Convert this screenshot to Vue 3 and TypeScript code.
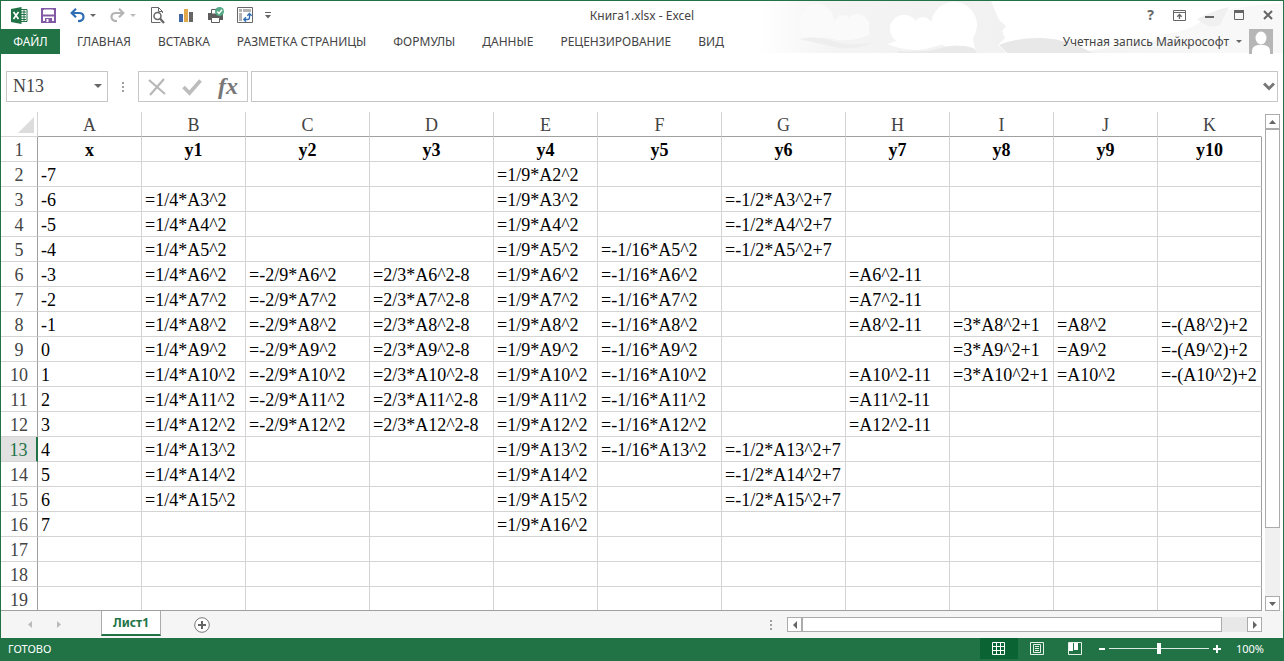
<script setup lang="ts">
import { ref } from 'vue'

interface Column {
  letter: string
  title: string
  width: number
}

const columns: Column[] = [
  { letter: 'A', title: 'x', width: 104 },
  { letter: 'B', title: 'y1', width: 104 },
  { letter: 'C', title: 'y2', width: 124 },
  { letter: 'D', title: 'y3', width: 124 },
  { letter: 'E', title: 'y4', width: 104 },
  { letter: 'F', title: 'y5', width: 124 },
  { letter: 'G', title: 'y6', width: 124 },
  { letter: 'H', title: 'y7', width: 104 },
  { letter: 'I', title: 'y8', width: 104 },
  { letter: 'J', title: 'y9', width: 104 },
  { letter: 'K', title: 'y10', width: 104 },
]

const between = (n: number, from: number, to: number) => n >= from && n <= to

function cell(letter: string, n: number): string {
  if (!between(n, 2, 16)) return ''
  switch (letter) {
    case 'A': return String(n - 9)
    case 'B': return between(n, 3, 15) ? `=1/4*A${n}^2` : ''
    case 'C': return between(n, 6, 12) ? `=-2/9*A${n}^2` : ''
    case 'D': return between(n, 6, 12) ? `=2/3*A${n}^2-8` : ''
    case 'E': return `=1/9*A${n}^2`
    case 'F': return between(n, 5, 13) ? `=-1/16*A${n}^2` : ''
    case 'G': return between(n, 3, 5) || between(n, 13, 15) ? `=-1/2*A${n}^2+7` : ''
    case 'H': return between(n, 6, 8) || between(n, 10, 12) ? `=A${n}^2-11` : ''
    case 'I': return between(n, 8, 10) ? `=3*A${n}^2+1` : ''
    case 'J': return between(n, 8, 10) ? `=A${n}^2` : ''
    case 'K': return between(n, 8, 10) ? `=-(A${n}^2)+2` : ''
    default: return ''
  }
}

const rows = Array.from({ length: 18 }, (_, i) => i + 2)
const tabs = ['ГЛАВНАЯ', 'ВСТАВКА', 'РАЗМЕТКА СТРАНИЦЫ', 'ФОРМУЛЫ', 'ДАННЫЕ', 'РЕЦЕНЗИРОВАНИЕ', 'ВИД']
const activeRow = 13
const nameBox = ref('N13')
const formula = ref('')
const zoom = ref(100)
</script>

<template>
  <div class="window">
    <header class="top">
      <svg class="clouds" viewBox="0 0 524 53" aria-hidden="true">
        <defs>
          <linearGradient id="sky" x1="0" x2="1" y1="0" y2="0">
            <stop offset="0" stop-color="#fff" />
            <stop offset="0.14" stop-color="#f4f4f4" />
            <stop offset="0.5" stop-color="#f1f1f1" />
            <stop offset="0.8" stop-color="#f6f6f6" />
            <stop offset="1" stop-color="#f6f6f6" />
          </linearGradient>
        </defs>
        <rect width="524" height="52" fill="url(#sky)" />
        <g fill="#fafafa">
          <circle cx="58" cy="20" r="17" /><circle cx="84" cy="23" r="9" /><circle cx="98" cy="25" r="12" />
          <path d="M42 20h68v14q-20 8-36 4t-33-1z" />
        </g>
        <path d="M40 38q18-4 34 2t42 1q-22 9-40 5t-36-8z" fill="#eeeeee" />
        <g fill="#fff">
          <circle cx="145" cy="28" r="14" /><circle cx="164" cy="25" r="9" /><circle cx="195" cy="24" r="23" />
          <path d="M132 28h80l4 20q-22-9-42-2t-46-3l10-3z" />
        </g>
        <path d="M138 50q30 2 44-3t32 0l4 5h-78z" fill="#e9e9e9" />
        <path d="M232 0h292v8q-40 0-54 8-20 0-27 20l-40 2-86 14h-70l-8-8 7-7-3-7 4-5-7-6z" fill="#fff" />
        <path d="M240 44q20-8 44-7t50 15h-86z" fill="#e8e8e8" />
        <path d="M398 34q30-2 46-15t80-17v50h-80q-15-12-46-18z" fill="#f8f8f8" />
        <path d="M438 18q20-10 32-12l-9 18q-11 5-23-6z" fill="#f0f0f0" />
      </svg>

      <div class="titlebar">
        <div class="quick">
          <svg class="i-excel" width="17" height="17" viewBox="0 0 17 17" aria-hidden="true">
            <path d="M10 2.500h6v12h-6" fill="#fff" stroke="#217346" />
            <path d="M10 5h5M10 7.500h5M10 10h5M10 12.500h5M13 3v11" stroke="#217346" />
            <path d="M0 2 10.500 0v17L0 15z" fill="#217346" />
            <path d="m2.500 5 5 7M7.500 5l-5 7" stroke="#fff" stroke-width="1.700" />
          </svg>
          <button class="i-save" aria-label="Сохранить">
            <svg width="15" height="15" viewBox="0 0 15 15"><path d="M1 1h13v13H1z" fill="#fff" stroke="#8259a5" stroke-width="2" /><path d="M1 6.500h13v2H1z" fill="#8259a5" /><path d="M3 1.500h9V6H3z" fill="#fff" /><path d="M4 10h7v4H4z" fill="#8259a5" /><path d="M5.500 11h2v3h-2z" fill="#fff" /></svg>
          </button>
          <button class="i-undo" aria-label="Отменить">
            <svg width="15" height="15" viewBox="0 0 15 15" fill="none" stroke="#2f6db5" stroke-width="2.200"><path d="M1.500 5H9q4.500 0 4.500 4T8 13.200M6 .8 1.700 5 6 9.200" /></svg>
          </button>
          <i class="caret dark"></i>
          <button class="i-redo" aria-label="Вернуть">
            <svg width="15" height="15" viewBox="0 0 15 15" fill="none" stroke="#b4b4b4" stroke-width="2.200"><path d="M13.500 5H6Q1.500 5 1.500 9T7 13.200M9 .8 13.300 5 9 9.200" /></svg>
          </button>
          <i class="caret light"></i>
          <button class="i-preview" aria-label="Предварительный просмотр">
            <svg width="15" height="17" viewBox="0 0 15 17" fill="none" stroke="#666"><path d="M12.500 6V4.500l-4-4h-7v15h9M8.500 .5v4h4" /><circle cx="7.500" cy="9" r="3.500" stroke-width="1.500" /><path d="m10 11.500 4 4.500" stroke-width="2.200" /></svg>
          </button>
          <button class="i-chart" aria-label="Диаграмма">
            <svg width="15" height="15" viewBox="0 0 15 15"><path d="M0 6h4v8H0z" fill="#4068a8" /><path d="M5 1h4v13H5z" fill="#e2a94c" /><path d="M10 4h4v10h-4z" fill="#666" /></svg>
          </button>
          <button class="i-print" aria-label="Быстрая печать">
            <svg width="18" height="16" viewBox="0 0 18 16"><path d="M1 6h15v7H1z" fill="#5c5c5c" /><path d="M4.500 7V2.500h6V7z" fill="#fff" stroke="#5c5c5c" /><path d="M4.500 10.500h8v5h-8z" fill="#fff" stroke="#5c5c5c" /><circle cx="12.500" cy="4.500" r="4.500" fill="#56ab86" /><path d="m10.300 4.500 1.700 2 3-3.700" fill="none" stroke="#fff" stroke-width="1.400" /></svg>
          </button>
          <button class="i-pivot" aria-label="Сводная таблица">
            <svg width="16" height="16" viewBox="0 0 16 16"><path d="M.5 .5h15v15H.5z" fill="#fff" stroke="#666" /><path d="M2 2h3v3H2zM6 2h8v3H6zM2 6h3v8H2z" fill="#b4b4b4" /><path d="M7 12.500h3.500q2 0 2-2V7M9 10.300 6.800 12.500 9 14.700M10.300 8.800l2.200-2.300 2.200 2.300" fill="none" stroke="#2f6db5" stroke-width="1.300" /></svg>
          </button>
          <button class="i-more" aria-label="Настройка панели">
            <svg width="6" height="7" viewBox="0 0 6 7"><path d="M0 .5h6" stroke="#666" /><path d="M0 3h6L3 6.500z" fill="#666" /></svg>
          </button>
        </div>
        <h1>Книга1.xlsx - Excel</h1>
        <div class="controls">
          <button class="help" aria-label="Справка">?</button>
          <button aria-label="Параметры ленты"><svg width="13" height="11" viewBox="0 0 13 11" fill="none" stroke="#666"><path d="M.5 .5h12v10H.5zM.5 2.500h12" /><path d="M6.500 9V5M4.300 6.700l2.200-2.200 2.200 2.200" stroke-width="1.300" /></svg></button>
          <button aria-label="Свернуть"><svg width="10" height="10" viewBox="0 0 10 10"><path d="M0 6h9v2H0z" fill="#666" /></svg></button>
          <button aria-label="Развернуть"><svg width="10" height="10" viewBox="0 0 10 10"><path d="M.5 1v8.500h9V1z" fill="none" stroke="#666" /><path d="M0 0h10v3H0z" fill="#666" /></svg></button>
          <button aria-label="Закрыть"><svg width="10" height="10" viewBox="0 0 10 10"><path d="m1 1 8 8M9 1 1 9" stroke="#666" stroke-width="2" /></svg></button>
        </div>
      </div>

      <nav class="ribbon">
        <button class="file">ФАЙЛ</button>
        <button v-for="t in tabs" :key="t" class="tab">{{ t }}</button>
        <button class="account">Учетная запись Майкрософт<i class="caret"></i></button>
        <svg class="avatar" width="24" height="25" viewBox="0 0 24 25" aria-hidden="true"><path d="M0 0h24v25H0z" fill="#b6b6b6" /><ellipse cx="12" cy="9" rx="5.500" ry="6.500" fill="#fff" /><path d="M3 25v-3q0-5 6-6h6q6 1 6 6v3z" fill="#fff" /></svg>
      </nav>
    </header>

    <section class="formula">
      <div class="name-box">
        <input v-model="nameBox" type="text" aria-label="Имя ячейки" />
        <button aria-label="Список имен"><i class="caret wide"></i></button>
      </div>
      <i class="dots"></i>
      <div class="actions">
        <button aria-label="Отмена"><svg width="18" height="18" viewBox="0 0 18 18"><path d="m1 2 16 14M16 1 2 17" stroke="#b8b8b8" stroke-width="2.200" /></svg></button>
        <button aria-label="Ввод"><svg width="20" height="18" viewBox="0 0 20 18"><path d="m1.500 9 6 6L18.500 2.500" fill="none" stroke="#bdbdbd" stroke-width="3.600" /></svg></button>
        <button class="fx" aria-label="Вставить функцию">fx</button>
      </div>
      <div class="entry">
        <input v-model="formula" type="text" aria-label="Строка формул" />
        <button aria-label="Развернуть строку формул"><svg width="12" height="9" viewBox="0 0 12 9"><path d="m1 1.500 5 5 5-5" fill="none" stroke="#777" stroke-width="3" /></svg></button>
      </div>
    </section>

    <main class="sheet">
      <div class="grid">
        <table>
          <colgroup>
            <col class="numbers" />
            <col v-for="c in columns" :key="c.letter" :style="{ width: c.width + 'px' }" />
          </colgroup>
          <thead>
            <tr>
              <th class="corner"><svg width="16" height="16" viewBox="0 0 16 16" aria-hidden="true"><path d="M16 0v16H0z" fill="#dcdcdc" /></svg></th>
              <th v-for="c in columns" :key="c.letter" scope="col">{{ c.letter }}</th>
            </tr>
          </thead>
          <tbody>
            <tr>
              <th scope="row">1</th>
              <td v-for="c in columns" :key="c.letter" class="title">{{ c.title }}</td>
            </tr>
            <tr v-for="n in rows" :key="n" :class="{ active: n === activeRow }">
              <th scope="row">{{ n }}</th>
              <td v-for="c in columns" :key="c.letter">{{ cell(c.letter, n) }}</td>
            </tr>
          </tbody>
        </table>
      </div>
      <div class="vscroll">
        <button aria-label="Вверх"><svg width="7" height="4" viewBox="0 0 7 4"><path d="M0 4h7L3.500 0z" fill="#666" /></svg></button>
        <div class="thumb"></div>
        <div class="track"></div>
        <button aria-label="Вниз"><svg width="7" height="4" viewBox="0 0 7 4"><path d="M0 0h7L3.500 4z" fill="#666" /></svg></button>
      </div>
    </main>

    <section class="sheetbar">
      <div class="arrows">
        <button aria-label="Предыдущий лист"><svg width="4" height="7" viewBox="0 0 4 7"><path d="M4 0v7L0 3.500z" fill="#bbb" /></svg></button>
        <button aria-label="Следующий лист"><svg width="4" height="7" viewBox="0 0 4 7"><path d="M0 0v7l4-3.500z" fill="#bbb" /></svg></button>
      </div>
      <button class="sheet-tab">Лист1</button>
      <button class="add" aria-label="Новый лист"><svg width="16" height="16" viewBox="0 0 16 16"><circle cx="8" cy="8" r="7.300" fill="#fff" stroke="#777" /><path d="M8 4v8M4 8h8" stroke="#666" stroke-width="2" /></svg></button>
      <i class="dots"></i>
      <div class="hscroll">
        <button aria-label="Влево"><svg width="4" height="8" viewBox="0 0 4 8"><path d="M4 0v8L0 4z" fill="#666" /></svg></button>
        <div class="thumb"></div>
        <div class="track"></div>
        <button aria-label="Вправо"><svg width="4" height="8" viewBox="0 0 4 8"><path d="M0 0v8l4-4z" fill="#666" /></svg></button>
      </div>
    </section>

    <footer class="status">
      <span class="ready">ГОТОВО</span>
      <div class="views">
        <button class="current" aria-label="Обычный"><svg width="13" height="13" viewBox="0 0 13 13" fill="none" stroke="#fff"><path d="M.5 .5h12v12H.5zM4.500 .5v12M8.500 .5v12M.5 4.500h12M.5 8.500h12" /></svg></button>
        <button aria-label="Разметка страницы"><svg width="14" height="13" viewBox="0 0 14 13" fill="none" stroke="#e6f1ea"><path d="M.5 .5h13v12H.5zM3.500 2.500h7v8h-7zM5 4.500h4M5 6.500h4M5 8.500h4" /></svg></button>
        <button aria-label="Страничный режим"><svg width="14" height="13" viewBox="0 0 14 13"><path d="M.5 .5h13v12H.5z" fill="none" stroke="#e6f1ea" /><path d="M1 1h4v8H1zM6 1h4v7H6z" fill="#fff" /></svg></button>
      </div>
      <button class="step" aria-label="Уменьшить"><svg width="8" height="8" viewBox="0 0 8 8"><path d="M1 3h6v2H1z" fill="#fff" /></svg></button>
      <input v-model="zoom" class="zoom" type="range" min="0" max="200" aria-label="Масштаб" />
      <button class="step" aria-label="Увеличить"><svg width="8" height="8" viewBox="0 0 8 8"><path d="M0 3h8v2H0zM3 0h2v8H3z" fill="#fff" /></svg></button>
      <span class="percent">{{ zoom }}%</span>
    </footer>
  </div>
</template>

<style>
body {
  margin: 0;
}
</style>

<style scoped>
* {
  box-sizing: border-box;
}
.window {
  display: flex;
  flex-direction: column;
  height: 100vh;
  overflow: hidden;
  border: 1px solid #217346;
  border-bottom: 0;
  background: #fff;
  color: #444;
  font: 12px/16px "Noto Sans", "Open Sans", sans-serif;
}
button,
input {
  margin: 0;
  padding: 0;
  border: 0;
  background: none;
  color: inherit;
  font: inherit;
  outline: 0;
}
button {
  display: flex;
  align-items: center;
  justify-content: center;
  flex: none;
}
svg {
  display: block;
  flex: none;
}
.top {
  position: relative;
}
.clouds {
  position: absolute;
  top: 0;
  right: 0;
  width: 524px;
  height: 53px;
}
.titlebar {
  position: relative;
  display: grid;
  grid-template-columns: 1fr auto 1fr;
  align-items: center;
  height: 28px;
}
.quick {
  display: flex;
  align-items: center;
  padding-left: 10px;
}
.caret {
  width: 0;
  height: 0;
  border: 3px solid transparent;
  border-top-color: #666;
  border-bottom: 0;
  flex: none;
}
.caret.light {
  border-top-color: #bbb;
}
.caret.wide {
  border-width: 4px 4px 0;
}
.i-save { margin-left: 13px; }
.i-undo { margin-left: 14px; }
.quick .caret { margin-left: 5px; }
.i-redo { margin-left: 14px; }
.i-preview { margin-left: 14px; }
.i-chart { margin-left: 14px; }
.i-print { margin-left: 13px; }
.i-pivot { margin-left: 12px; }
.i-more { margin-left: 12px; }
h1 {
  margin: 0;
  padding-top: 2px;
  font: inherit;
}
.controls {
  display: flex;
  align-items: center;
  justify-content: flex-end;
  gap: 19px;
  padding-right: 10px;
}
.help {
  color: #666;
  font-size: 14px;
  font-weight: 700;
}
.ribbon {
  position: relative;
  display: flex;
  align-items: center;
  height: 25px;
}
.file {
  width: 59px;
  height: 25px;
  background: #217346;
  color: #fff;
}
.tab {
  margin-left: 27px;
}
.file + .tab {
  margin-left: 17px;
}
.account {
  gap: 7px;
  margin-left: auto;
}
.avatar {
  margin: 0 10px 0 7px;
}
.formula {
  display: flex;
  height: 31px;
  margin: 17px 5px 0;
  flex: none;
}
.name-box,
.actions,
.entry {
  display: flex;
  align-items: center;
  border: 1px solid #c6c6c6;
}
.name-box {
  width: 102px;
  padding: 0 5px 2px 6px;
}
.name-box input {
  flex: 1;
  min-width: 0;
  font: 18px/24px "Liberation Serif", serif;
}
.dots {
  align-self: center;
  width: 2px;
  height: 10px;
  background: repeating-linear-gradient(#a0a0a0 0 2px, transparent 2px 4px);
}
.formula .dots {
  margin: 0 14px;
}
.actions {
  width: 110px;
  justify-content: space-between;
  padding: 0 9px;
}
.fx {
  padding-bottom: 2px;
  font: italic 700 24px/24px "Liberation Serif", serif;
  color: #777;
}
.entry {
  flex: 1;
  margin-left: 3px;
}
.entry input {
  flex: 1;
  min-width: 0;
  height: 24px;
  padding: 0 6px;
  font: 18px/24px "Liberation Serif", serif;
}
.entry button {
  margin-right: 2px;
}
.sheet {
  display: flex;
  flex: 1;
  min-height: 0;
  margin-top: 10px;
  padding-right: 3px;
}
.grid {
  flex: 1;
  min-width: 0;
  overflow: hidden;
  border-bottom: 1px solid #a0a0a0;
}
table {
  width: 1261px;
  table-layout: fixed;
  border-collapse: separate;
  border-spacing: 0;
  color: #000;
  font: 18px/22px "Liberation Serif", serif;
}
.numbers {
  width: 37px;
}
th,
td {
  height: 25px;
  padding: 2px 0 0;
  border-right: 1px solid #d4d4d4;
  border-bottom: 1px solid #d4d4d4;
  white-space: nowrap;
}
th {
  color: #444;
  font-weight: 400;
}
thead th {
  border-bottom-color: #a0a0a0;
}
thead th:last-child {
  border-right-color: transparent;
}
tbody th {
  border-right-color: #a0a0a0;
}
.corner svg {
  margin: 0 3px 0 auto;
}
thead .corner {
  border-bottom-color: #d4d4d4;
}
td {
  padding-left: 3px;
}
td:last-child {
  border-right-color: #a0a0a0;
}
td.title {
  padding-left: 0;
  text-align: center;
  font-weight: 700;
}
.active th {
  border-right: 2px solid #217346;
  background: #e1e1e1;
  color: #217346;
}
.vscroll {
  display: flex;
  flex-direction: column;
  width: 15px;
  margin: 2px 0 0 3px;
}
.vscroll button,
.hscroll button {
  width: 15px;
  height: 15px;
  border: 1px solid #ababab;
  background: #fff;
}
.thumb {
  border: 1px solid #ababab;
  background: #fff;
}
.track {
  background: #f0f0f0;
}
.vscroll .thumb {
  flex: 399;
}
.vscroll .track {
  flex: 68;
}
.sheetbar {
  display: flex;
  align-items: center;
  height: 27px;
  padding-right: 21px;
  flex: none;
  background: #f5f5f5;
}
.arrows {
  display: flex;
  gap: 25px;
  width: 100px;
  padding-left: 27px;
}
.sheet-tab {
  align-self: flex-start;
  width: 60px;
  height: 25px;
  border: 1px solid #ababab;
  border-width: 0 1px;
  border-bottom: 2px solid #217346;
  background: #fff;
  color: #217346;
  font-weight: 700;
}
.add {
  margin-left: 33px;
}
.sheetbar .dots {
  margin-left: auto;
}
.hscroll {
  display: flex;
  width: 475px;
  margin-left: 15px;
}
.hscroll .thumb {
  flex: 420;
}
.hscroll .track {
  flex: 25;
  background: #e8e8e8;
}
.status {
  display: flex;
  align-items: center;
  height: 23px;
  padding: 0 19px 2px 7px;
  flex: none;
  background: #217346;
  color: #fff;
  font-size: 11px;
}
.views {
  display: flex;
  margin-left: auto;
}
.views button {
  width: 38px;
  height: 21px;
}
.views .current {
  background: #0a6332;
}
.step {
  margin-left: 4px;
}
.zoom {
  appearance: none;
  width: 100px;
  height: 12px;
  margin-left: 3px;
  background: linear-gradient(#dcebe2, #dcebe2) center / 100% 1px no-repeat;
}
.zoom::-webkit-slider-thumb {
  appearance: none;
  width: 4px;
  height: 11px;
  background: #fff;
}
.percent {
  margin-left: 15px;
}
</style>
